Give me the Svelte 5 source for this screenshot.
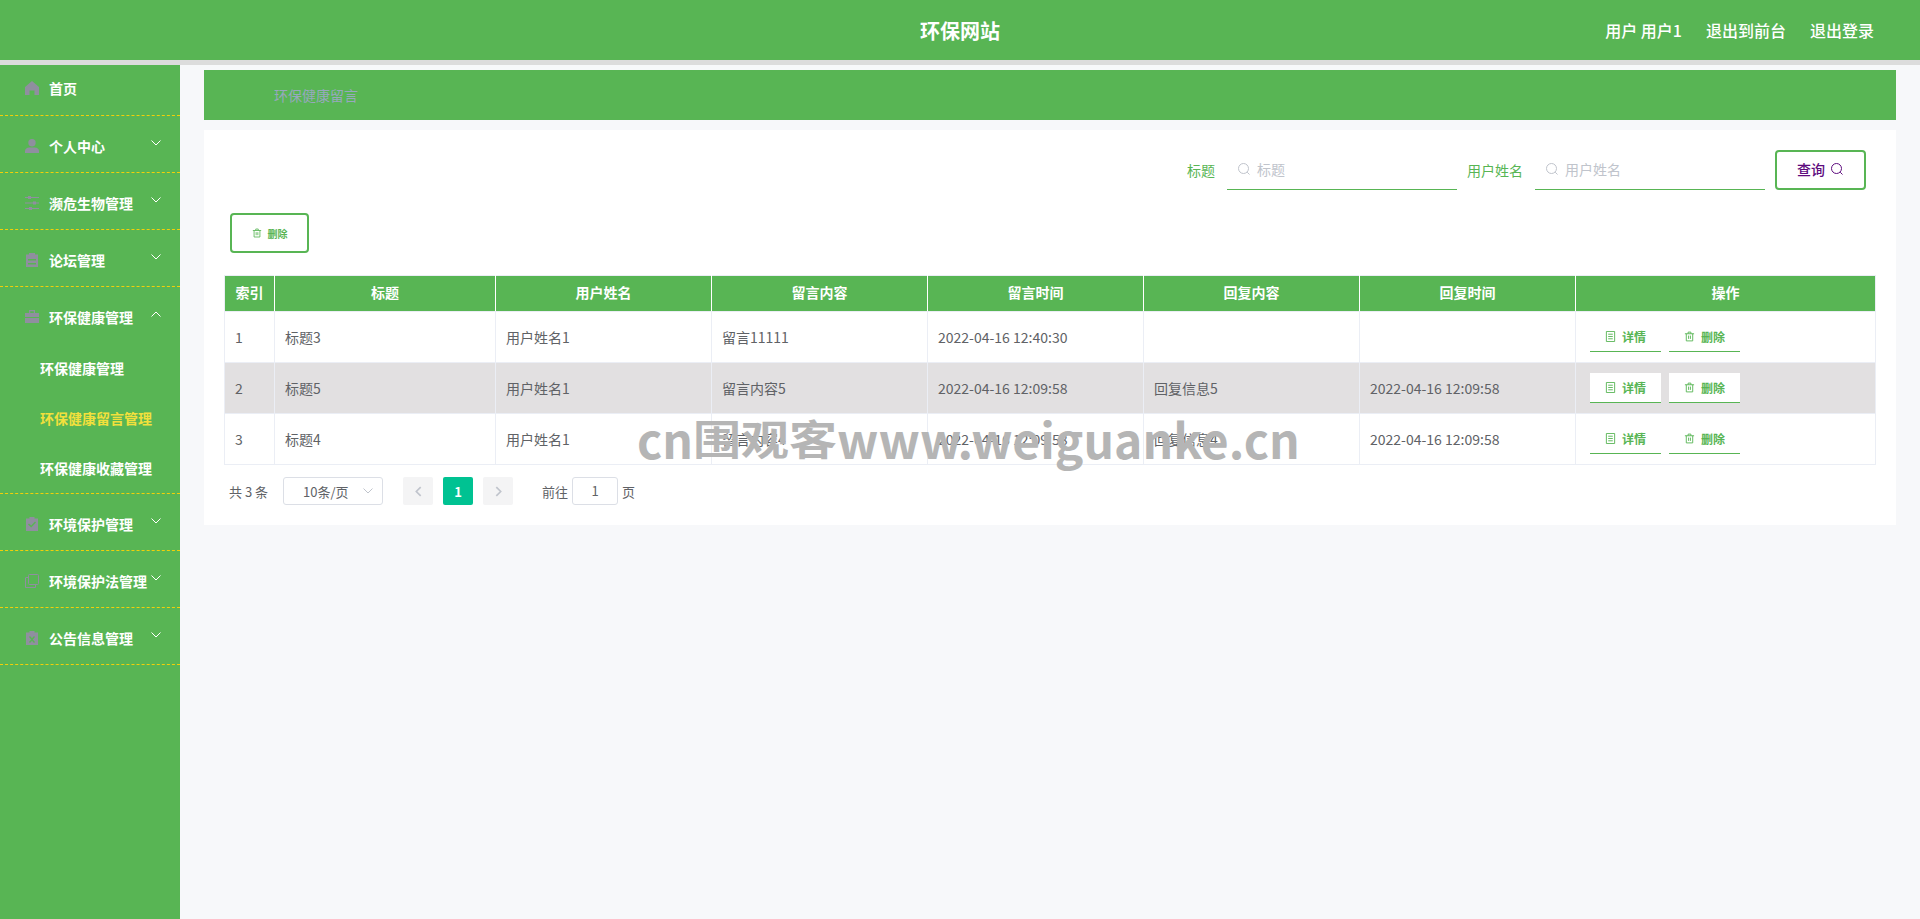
<script>
  const menus = [
    { name: '首页', icon: 'home', arrow: false },
    { name: '个人中心', icon: 'user', arrow: true },
    { name: '濒危生物管理', icon: 'sliders', arrow: true },
    { name: '论坛管理', icon: 'clip', arrow: true },
    { name: '环保健康管理', icon: 'case', arrow: true, open: true, subs: ['环保健康管理', '环保健康留言管理', '环保健康收藏管理'] },
    { name: '环境保护管理', icon: 'check', arrow: true },
    { name: '环境保护法管理', icon: 'copy', arrow: true },
    { name: '公告信息管理', icon: 'cross', arrow: true }
  ];
  const heads = ['索引', '标题', '用户姓名', '留言内容', '留言时间', '回复内容', '回复时间', '操作'];
  const widths = [50, 221, 216, 216, 216, 216, 216, 300];
  const rows = [
    ['1', '标题3', '用户姓名1', '留言11111', '2022-04-16 12:40:30', '', ''],
    ['2', '标题5', '用户姓名1', '留言内容5', '2022-04-16 12:09:58', '回复信息5', '2022-04-16 12:09:58'],
    ['3', '标题4', '用户姓名1', '留言内容4', '2022-04-16 12:09:58', '回复信息4', '2022-04-16 12:09:58']
  ];
</script>

{#snippet trash()}
  <svg class="ico" viewBox="0 0 12 12" fill="none" stroke="currentColor" stroke-width="1">
    <path d="M1 3h10M4.500 3V1.200h3V3M2.500 3v7.800h7V3M5 5v3.600M7 5v3.600" />
  </svg>
{/snippet}

{#snippet search()}
  <svg class="glass" viewBox="0 0 14 14" fill="none" stroke="currentColor" stroke-width="1">
    <circle cx="6.500" cy="6.500" r="5" /><path d="M10.200 10.200l2.300 2.300" />
  </svg>
{/snippet}

{#snippet menuIcon(kind)}
  <svg class="micon" viewBox="0 0 14 14" fill="#8f8f9f">
    {#if kind === 'home'}
      <path d="M7 0L0 6v8h4.500V9.500h5V14H14V6z" />
    {:else if kind === 'user'}
      <circle cx="7" cy="3.700" r="3.700" /><path d="M0 14v-2c0-2 2-3.500 4-3.500h6c2 0 4 1.500 4 3.500v2z" />
    {:else if kind === 'sliders'}
      <path d="M0 1h14v1H0zM0 6.500h14v1H0zM0 12h14v1H0z" /><path d="M3 0h3v3H3zM8 5.500h3v3H8zM4 11h3v3H4z" />
    {:else if kind === 'clip'}
      <path fill-rule="evenodd" d="M4 0h6v1.500h3V14H1V1.500h3zM3 6v1.500h8V6zM3 10v1.500h8V10z" />
    {:else if kind === 'case'}
      <path fill-rule="evenodd" d="M4 0h6v3h4v4H0V3h4zM5.200 1.200V3h3.600V1.200zM0 8h14v5H0z" />
    {:else if kind === 'check'}
      <path fill-rule="evenodd" d="M4.500 0h5v1.500H13V14H1V1.500h3.500zM3 7.500l3.200 3L11 5.500l-1-1-3.800 4-2.200-2z" />
    {:else if kind === 'copy'}
      <g fill="none" stroke="#8f8f9f" stroke-width="1"><rect x="3.500" y="0.500" width="10" height="10" rx="1" /><path d="M3.500 3.500H1a.5.5 0 0 0-.5.5v9.500h10V11" /></g>
    {:else}
      <path fill-rule="evenodd" d="M4.500 0h5v1.500H13V14H1V1.500h3.500zM4 6l2.200 2.500L4 11l1 1 2-2.300L9 12l1-1-2.200-2.500L10 6 9 5 7 7.300 5 5z" />
    {/if}
  </svg>
{/snippet}

<div class="page">
  <header class="top">
    <div class="brand">环保网站</div>
    <div class="links">
      <span>用户 用户1</span>
      <span>退出到前台</span>
      <span>退出登录</span>
    </div>
  </header>

  <div class="body">
    <aside class="side">
      {#each menus as m}
        <div class="group" class:first={!m.arrow}>
          <div class="title">
            {@render menuIcon(m.icon)}
            <span>{m.name}</span>
            {#if m.arrow}
              <svg class="chev" class:up={m.open} viewBox="0 0 10 6" fill="none" stroke="#fff" stroke-width="1">
                <path d="M0.500 0.500L5 5l4.500-4.500" />
              </svg>
            {/if}
          </div>
          {#if m.subs}
            {#each m.subs as s, i}
              <div class="sub" class:on={i === 1}>{s}</div>
            {/each}
          {/if}
        </div>
      {/each}
    </aside>

    <main class="main">
      <div class="crumb">环保健康留言</div>

      <section class="card">
        <div class="filters">
          <span class="lab">标题</span>
          <div class="field">{@render search()}<span>标题</span></div>
          <span class="lab">用户姓名</span>
          <div class="field">{@render search()}<span>用户姓名</span></div>
          <button class="query">查询 <span class="qi">{@render search()}</span></button>
        </div>

        <button class="bulk">{@render trash()}<span>删除</span></button>

        <table>
          <colgroup>
            {#each widths as w}<col style="width:{w}px" />{/each}
          </colgroup>
          <thead>
            <tr>{#each heads as h}<th>{h}</th>{/each}</tr>
          </thead>
          <tbody>
            {#each rows as r, i}
              <tr class:alt={i === 1}>
                {#each r as c}<td>{c}</td>{/each}
                <td>
                  <div class="ops">
                    <button class="op">
                      <svg class="ico" viewBox="0 0 12 12" fill="none" stroke="currentColor" stroke-width="1"><path d="M1.500 0.500h9v11h-9zM3.500 3.500h5M3.500 6h5M3.500 8.500h5" /></svg>
                      <span>详情</span>
                    </button>
                    <button class="op">{@render trash()}<span>删除</span></button>
                  </div>
                </td>
              </tr>
            {/each}
          </tbody>
        </table>

        <div class="pager">
          <span class="total">共 3 条</span>
          <div class="size">
            <span>10条/页</span>
            <svg viewBox="0 0 10 6" fill="none" stroke="#c0c4cc" stroke-width="1"><path d="M0.500 0.500L5 5l4.500-4.500" /></svg>
          </div>
          <div class="pbtn first-btn"><svg viewBox="0 0 6 10" fill="none" stroke="#c0c4cc" stroke-width="1.500"><path d="M5 1L1 5l4 4" /></svg></div>
          <div class="pbtn cur">1</div>
          <div class="pbtn"><svg viewBox="0 0 6 10" fill="none" stroke="#c0c4cc" stroke-width="1.500"><path d="M1 1l4 4-4 4" /></svg></div>
          <span class="goto">前往</span>
          <div class="jump">1</div>
          <span class="unit">页</span>
        </div>
      </section>
    </main>
  </div>

  <div class="mark">cn<span class="zh">围观客</span>www.weiguanke.cn</div>
</div>

<style>
  :global(body) {
    margin: 0;
    background: #f7f8fa;
    font-family: "Noto Sans CJK SC", "Noto Sans", sans-serif;
  }
  button {
    font-family: inherit;
    cursor: pointer;
  }
  .page {
    position: relative;
    height: 919px;
    overflow: hidden;
    display: flex;
    flex-direction: column;
  }
  .top {
    position: relative;
    flex: none;
    height: 60px;
    border-bottom: 5px solid #dcdcdc;
    background: #58b554;
    color: #fff;
    display: flex;
    align-items: center;
    justify-content: flex-end;
    padding-right: 46px;
  }
  .brand {
    position: absolute;
    left: 0;
    right: 0;
    text-align: center;
    font-size: 20px;
    font-weight: 700;
  }
  .links {
    display: flex;
    gap: 24px;
    font-size: 16px;
    font-weight: 500;
    position: relative;
  }
  .body {
    flex: 1;
    display: flex;
    min-height: 0;
  }
  .side {
    flex: none;
    width: 180px;
    background: #58b554;
    color: #fff;
    font-size: 14px;
    font-weight: 700;
  }
  .group {
    border-bottom: 1px dashed #f2d008;
  }
  .title {
    height: 56px;
    box-sizing: border-box;
    padding-top: 4px;
    display: flex;
    align-items: center;
    padding-left: 25px;
    position: relative;
    line-height: 20px;
  }
  .group.first .title {
    height: 50px;
    padding-top: 0;
    padding-bottom: 4px;
  }
  .micon {
    width: 14px;
    height: 14px;
    margin-right: 10px;
    flex: none;
  }
  .chev {
    position: absolute;
    left: 151px;
    top: 24px;
    width: 10px;
    height: 6px;
  }
  .chev.up {
    transform: rotate(180deg);
  }
  .sub {
    height: 50px;
    line-height: 50px;
    padding-left: 40px;
  }
  .sub.on {
    color: #f2e03c;
  }
  .main {
    flex: 1;
    min-width: 0;
    padding: 5px 24px 0;
  }
  .crumb {
    height: 50px;
    background: #58b554;
    color: #97a8be;
    font-size: 14px;
    line-height: 50px;
    padding-left: 70px;
  }
  .card {
    margin-top: 10px;
    height: 395px;
    box-sizing: border-box;
    background: #fff;
    padding: 20px;
  }
  .filters {
    display: flex;
    align-items: flex-start;
    justify-content: flex-end;
    padding-right: 10px;
    height: 40px;
  }
  .lab {
    color: #58b554;
    font-size: 14px;
    line-height: 41px;
    margin-right: 12px;
  }
  .field {
    flex: none;
    width: 220px;
    height: 37px;
    padding: 0 0 2px 10px;
    border-bottom: 1px solid #58b554;
    margin-right: 10px;
    display: flex;
    align-items: center;
    gap: 6px;
    color: #c0c4cc;
    font-size: 14px;
  }
  .glass {
    width: 14px;
    height: 14px;
    flex: none;
  }
  .query {
    width: 91px;
    height: 40px;
    box-sizing: border-box;
    border: 2px solid #58b554;
    border-radius: 4px;
    background: #fff;
    color: #5e0b7e;
    font-size: 14px;
    font-weight: 500;
    padding: 0 0 2px;
    display: flex;
    align-items: center;
    justify-content: center;
    gap: 5px;
  }
  .qi {
    display: flex;
  }
  .bulk {
    display: flex;
    align-items: center;
    justify-content: center;
    gap: 6px;
    width: 79px;
    height: 40px;
    box-sizing: border-box;
    margin: 23px 0 22px 6px;
    border: 2px solid #58b554;
    border-radius: 4px;
    background: #fff;
    color: #58b554;
    font-size: 10px;
    font-weight: 700;
    padding: 0;
  }
  .bulk .ico {
    width: 10px;
    height: 10px;
  }
  .ico {
    width: 11px;
    height: 11px;
    flex: none;
  }
  table {
    width: 1651px;
    table-layout: fixed;
    border-collapse: collapse;
    font-size: 14px;
    color: #606266;
    border: 1px solid #ebeef5;
  }
  th {
    height: 36px;
    padding: 0 0 3px;
    box-sizing: border-box;
    background: #58b554;
    color: #fff;
    font-weight: 700;
    border-right: 1px solid #fff;
    border-bottom: 1px solid #ebeef5;
  }
  th:last-child {
    border-right: 0;
  }
  td {
    height: 50px;
    padding: 0 10px;
    border-right: 1px solid #ebeef5;
    border-bottom: 1px solid #ebeef5;
  }
  tr.alt td {
    background: #e2e0e1;
  }
  .ops {
    display: flex;
    gap: 8px;
    padding-left: 4px;
  }
  .op {
    width: 71px;
    height: 30px;
    display: flex;
    align-items: center;
    justify-content: center;
    gap: 6px;
    background: #fff;
    border: 0;
    border-bottom: 1px solid #58b554;
    color: #58b554;
    font-size: 12px;
    font-weight: 700;
    padding: 0;
  }
  .pager {
    display: flex;
    align-items: center;
    height: 28px;
    margin-top: 12px;
    padding-left: 5px;
    font-size: 13px;
    color: #606266;
  }
  .total {
    width: 54px;
  }
  .size {
    width: 100px;
    height: 28px;
    box-sizing: border-box;
    border: 1px solid #dcdfe6;
    border-radius: 3px;
    display: flex;
    align-items: center;
    justify-content: space-between;
    padding: 0 9px 0 19px;
    margin-right: 20px;
  }
  .size svg {
    width: 10px;
    height: 6px;
  }
  .pbtn {
    width: 30px;
    height: 28px;
    background: #f4f4f5;
    border-radius: 2px;
    margin-right: 10px;
    display: flex;
    align-items: center;
    justify-content: center;
  }
  .pbtn svg {
    width: 7px;
    height: 11px;
  }
  .pbtn.cur {
    background: #00c292;
    color: #fff;
    font-weight: 700;
  }
  .goto {
    margin-left: 19px;
    margin-right: 4px;
  }
  .jump {
    width: 46px;
    height: 28px;
    box-sizing: border-box;
    border: 1px solid #dcdfe6;
    border-radius: 3px;
    text-align: center;
    line-height: 26px;
  }
  .unit {
    margin-left: 4px;
  }
  .mark {
    position: absolute;
    left: 637px;
    top: 403px;
    font-size: 48px;
    font-weight: 700;
    color: #b5b5b5;
    line-height: 70px;
    white-space: nowrap;
    pointer-events: none;
  }
  .zh {
    display: inline-block;
    transform: translateY(-3px) scaleY(0.85);
    transform-origin: 50% 70%;
  }
</style>
